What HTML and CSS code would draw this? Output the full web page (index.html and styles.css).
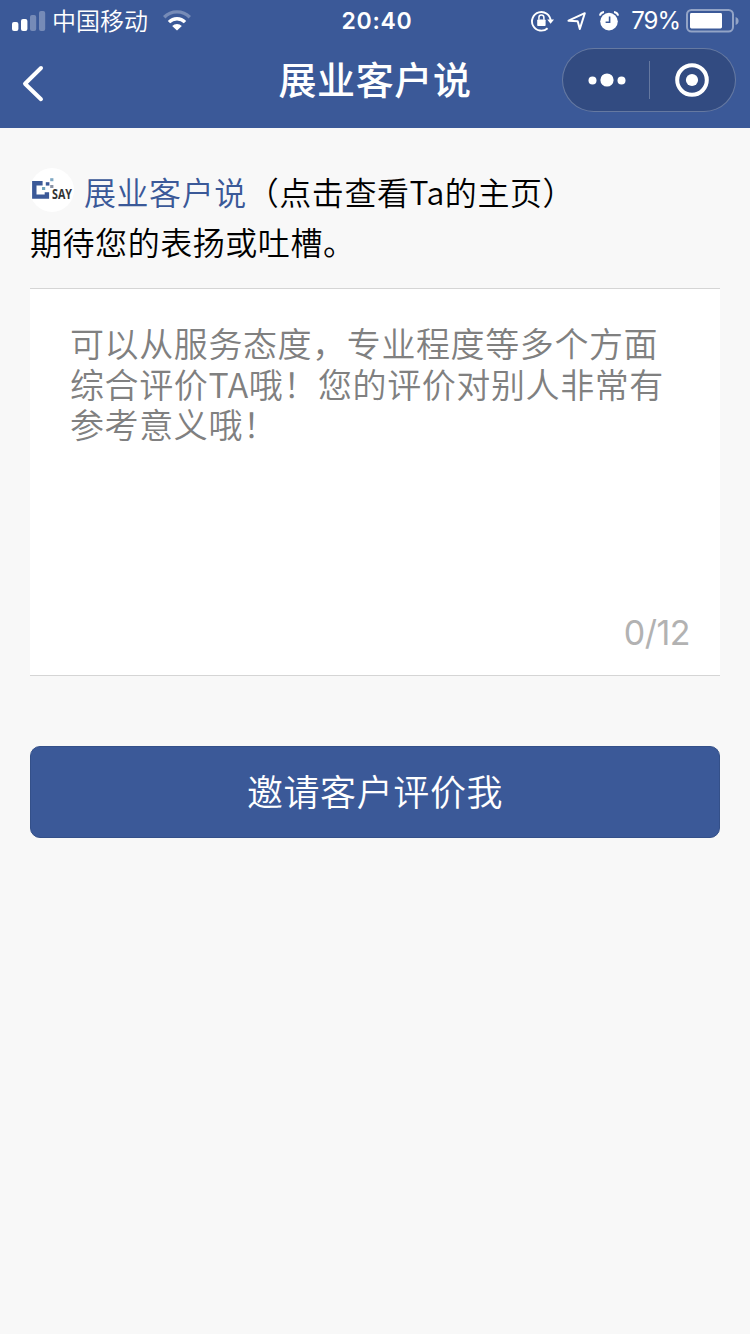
FILE: index.html
```html
<!DOCTYPE html>
<html lang="zh-CN">
<head>
	<meta charset="utf-8">
	<meta name="viewport" content="width=device-width, initial-scale=1.0">
	<title>展业客户说</title>
	<link rel="stylesheet" href="styles.css">
</head>
<body>
	<header class="header">
		<div class="status">
			<div class="status-left">
				<svg class="signal" width="34" height="20" viewBox="0 0 34 20" fill="#fff">
					<rect x="0" y="11" width="6.4" height="9" rx="2"/>
					<rect x="9" y="8" width="6.4" height="12" rx="2"/>
					<rect x="18" y="4" width="6.2" height="16" rx="2" opacity=".3"/>
					<rect x="27" y="0" width="6.2" height="20" rx="2" opacity=".3"/>
				</svg>
				<span class="carrier">中国移动</span>
				<svg class="wifi" width="28" height="22" viewBox="0 0 28 22" fill="none" stroke="#fff">
					<path d="M1.2 7.2a18.1 18.1 0 0 1 25.6 0" stroke-width="3.4" opacity=".3"/>
					<path d="M6 12.1a11.3 11.3 0 0 1 16 0" stroke-width="3.4"/>
					<path d="M9.2 16a6.8 6.8 0 0 1 9.6 0L14 20.6z" fill="#fff" stroke="none"/>
				</svg>
			</div>
			<span class="time">20:40</span>
			<div class="status-right">
				<svg class="lock" width="23" height="22" viewBox="0 0 23 22">
					<path d="M16.6 18.2A9.3 9.3 0 1 1 19.6 11" fill="none" stroke="#fff" stroke-width="1.9"/>
					<path d="M16.2 9.4h6.8l-3.4 4.4z" fill="#fff"/>
					<rect x="6.2" y="9.4" width="8.4" height="6.6" rx=".8" fill="#fff"/>
					<path d="M7.9 9.8V7.6a2.5 2.5 0 0 1 5 0v2.2" fill="none" stroke="#fff" stroke-width="1.5"/>
				</svg>
				<svg class="arrow" width="20" height="20" viewBox="0 0 20 20" fill="none" stroke="#fff" stroke-width="2" stroke-linejoin="round">
					<path d="M1.5 9.7L17.8 2.2l-5 15.8-2.1-7.7z"/>
				</svg>
				<svg class="alarm" width="20" height="20" viewBox="0 0 20 20">
					<circle cx="10" cy="10.6" r="8.8" fill="#fff"/>
					<path d="M.9 4.6Q1.6 1.4 5 1M19.1 4.6Q18.4 1.4 15 1" fill="none" stroke="#fff" stroke-width="1.9"/>
					<path d="M10.6 5.6v5.7H6.6" fill="none" stroke="#3b5998" stroke-width="1.6"/>
				</svg>
				<span class="percent">79%</span>
				<svg class="battery" width="53" height="24" viewBox="0 0 53 24">
					<rect x="1" y="1" width="46" height="21.6" rx="4.5" fill="none" stroke="#fff" stroke-width="2" opacity=".45"/>
					<path d="M49.6 8q3 1.2 3 4t-3 4z" fill="#fff" opacity=".45"/>
					<rect x="4" y="4" width="32" height="15.4" rx="1.4" fill="#fff"/>
				</svg>
			</div>
		</div>
		<nav class="nav">
			<svg class="back" width="24" height="38" viewBox="0 0 24 38" fill="none" stroke="#fff" stroke-width="4" stroke-linecap="round" stroke-linejoin="round">
				<path d="M20 3L4 18.7 20 34.2"/>
			</svg>
			<h1 class="title">展业客户说</h1>
			<div class="capsule">
				<svg class="more" width="38" height="14" viewBox="0 0 38 14" fill="#fff">
					<circle cx="4.5" cy="7.4" r="4"/>
					<circle cx="19" cy="7" r="6.6"/>
					<circle cx="33.5" cy="7.4" r="4"/>
				</svg>
				<span class="divider"></span>
				<svg class="target" width="34" height="34" viewBox="0 0 34 34">
					<circle cx="17" cy="17" r="14.8" fill="none" stroke="#fff" stroke-width="4"/>
					<circle cx="17" cy="17" r="6.1" fill="#fff"/>
				</svg>
			</div>
		</nav>
	</header>

	<main class="content">
		<div class="intro">
			<div class="intro-line">
				<svg class="logo" width="44" height="44" viewBox="0 0 44 44">
					<circle cx="22" cy="22" r="22" fill="#fff"/>
					<path d="M12.6 15.2H4.3v13.4h12.6v-4.4" fill="none" stroke="#3b5998" stroke-width="4.4"/>
					<rect x="15.8" y="14.2" width="3.6" height="3.4" fill="#3b5998"/>
					<rect x="20.2" y="10.2" width="3.2" height="3" fill="#7fa9c4"/>
					<rect x="12" y="19" width="3.2" height="3" fill="#6fa3bd"/>
					<rect x="20.2" y="17" width="3.2" height="3" fill="#8a93a5"/>
					<text class="logo-text" x="22" y="31.2" textLength="20" lengthAdjust="spacingAndGlyphs">SAY</text>
				</svg>
				<a class="name">展业客户说</a>
				<span>（点击查看Ta的主页）</span>
			</div>
			<div>期待您的表扬或吐槽。</div>
		</div>

		<div class="box">
			<textarea class="field" placeholder="可以从服务态度，专业程度等多个方面综合评价TA哦！您的评价对别人非常有参考意义哦！"></textarea>
			<div class="counter">0/12</div>
		</div>

		<button class="btn">邀请客户评价我</button>
	</main>
</body>
</html>
```

FILE: styles.css
```css
* {
	box-sizing: border-box;
}

body {
	margin: 0;
	min-height: 1334px;
	background: #f8f8f8;
	color: #000;
	font-family: Inter, "Noto Sans CJK SC", sans-serif;
}

svg {
	display: block;
	flex: none;
}

.header {
	height: 128px;
	background: #3b5998;
	color: #fff;
}

/* status bar */
.status {
	display: grid;
	grid-template-columns: 1fr auto 1fr;
	align-items: center;
	height: 40px;
	padding: 0 11px 0 12px;
	line-height: 40px;
}

.status-left,
.status-right {
	display: flex;
	align-items: center;
	height: 40px;
}

.status-right {
	justify-content: flex-end;
}

.carrier {
	margin-left: 6px;
	padding-top: 2px;
	font-size: 24px;
	font-weight: 350;
}

.wifi {
	margin-left: 15px;
}

.time {
	padding: 1px 0 0 3px;
	font-size: 23px;
	font-weight: 600;
	letter-spacing: 0.7px;
}

.arrow {
	margin-left: 13px;
}

.alarm {
	margin-left: 12px;
}

.percent {
	margin: 0 6px 0 12px;
	padding-top: 1px;
	font-size: 24px;
	letter-spacing: -1px;
}

/* title bar */
.nav {
	display: grid;
	grid-template-columns: 1fr auto 1fr;
	align-items: center;
	height: 88px;
	padding: 0 14px;
}

.back {
	margin-left: 7px;
}

.title {
	margin: -8px 0 0;
	font-size: 38px;
	font-weight: 500;
	line-height: 60px;
	letter-spacing: 0.6px;
}

.capsule {
	display: grid;
	grid-template-columns: 1fr 1px 1fr;
	align-items: center;
	justify-items: center;
	justify-self: end;
	width: 174px;
	height: 64px;
	margin-top: -8px;
	border: 1px solid rgba(255, 255, 255, 0.25);
	border-radius: 32px;
	background: rgba(0, 0, 0, 0.15);
}

.more {
	margin-left: 3px;
}

.divider {
	width: 1px;
	height: 38px;
	background: rgba(255, 255, 255, 0.25);
}

/* page */
.content {
	padding: 38px 30px 0;
}

.intro {
	font-family: "Noto Sans CJK SC", sans-serif;
	font-size: 32px;
	font-weight: 350;
	line-height: 50px;
	letter-spacing: 0.55px;
}

.intro-line {
	display: flex;
	height: 50px;
}

.logo {
	margin: 2px 10px 0 0;
	overflow: visible;
}

.logo-text {
	font-family: "Open Sans", sans-serif;
	font-size: 14px;
	font-weight: 700;
	letter-spacing: 0;
	fill: #333;
}

.name {
	color: #3b5998;
}

.box {
	height: 388px;
	margin-top: 22px;
	padding: 34px 30px 0 40px;
	border-top: 1px solid #d5d5d5;
	border-bottom: 1px solid #d5d5d5;
	background: #fff;
}

.field {
	display: block;
	width: 610px;
	height: 283px;
	padding: 0;
	border: 0;
	outline: 0;
	resize: none;
	overflow: hidden;
	background: none;
	font: 350 34px/40.5px "Noto Sans CJK SC", sans-serif;
	letter-spacing: 0.6px;
}

.field::placeholder {
	color: #808080;
}

.counter {
	color: #b2b2b2;
	font-size: 34px;
	line-height: 54px;
	text-align: right;
	letter-spacing: -0.5px;
}

.btn {
	display: block;
	width: 100%;
	height: 92px;
	margin-top: 70px;
	padding: 0 0 5px;
	border: 1px solid #345089;
	border-radius: 10px;
	background: #3b5998;
	color: #fff;
	font: 350 36px/60px "Noto Sans CJK SC", sans-serif;
	letter-spacing: 0.6px;
}
```
